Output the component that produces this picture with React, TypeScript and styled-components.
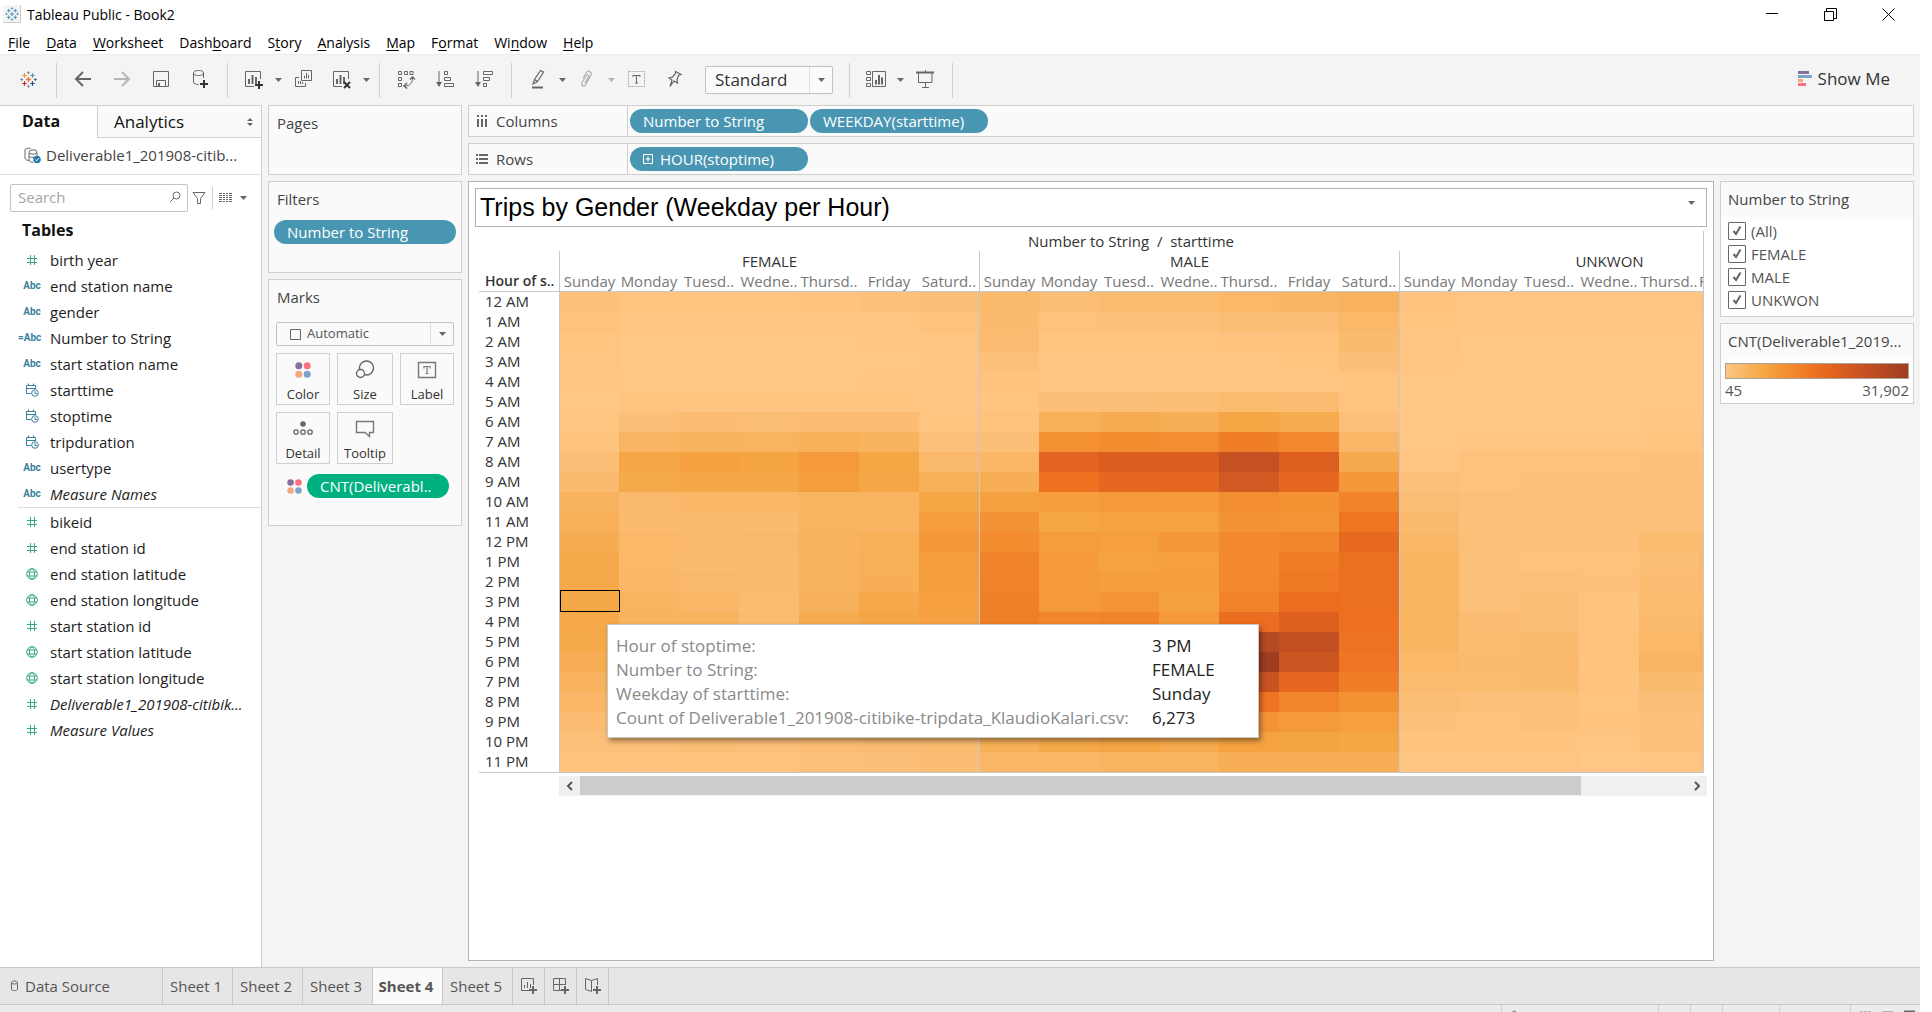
import React from "react";
import styled, { createGlobalStyle, css } from "styled-components";

/* ---------- theme values ---------- */

const sans = '"Open Sans", "Noto Sans", sans-serif';
const line = "#cfcfcf";
const panel = "#f4f4f4";
const card = "#fafafa";
const glyph = "#666666";
const blue = "#4996b2";
const green = "#00b180";

const GlobalStyle = createGlobalStyle`
  *, *::before, *::after { box-sizing: border-box; }
  body { margin: 0; background: #fff; font-family: ${sans}; font-size: 15px; color: #333; }
  button, input, select { font: inherit; color: inherit; margin: 0; padding: 0; }
  button { border: 0; background: none; }
  h1, h2, h3, ul, dl, dd { margin: 0; padding: 0; font-size: inherit; font-weight: 400; }
  ul { list-style: none; }
  svg { display: block; flex: none; }
`;

/* ---------- data ---------- */

const ramp = [
  "ffc685", "fcbe75", "f9b665", "f7ae54", "f5a645", "f59c3c", "f49234",
  "f2882d", "f07e27", "ee7422", "e96b20", "e36420", "db5e20", "d25921",
  "ca5422", "c14f22", "b84b23", "af4623", "a64122", "9e3d22",
].map((h) => [0, 2, 4].map((i) => parseInt(h.slice(i, i + 2), 16)));

const shade = (v: number) => {
  const lo = Math.min(Math.floor(v), ramp.length - 2);
  const t = v - lo;
  const mix = ramp[lo].map((c, i) => Math.round(c + (ramp[lo + 1][i] - c) * t));
  return `rgb(${mix.join(",")})`;
};

const days = ["Sunday", "Monday", "Tuesd..", "Wedne..", "Thursd..", "Friday", "Saturd.."];
/* the last pane runs past the right edge of the view, so its final labels shorten */
const lastDays = [...days.slice(0, 5), "F", ""];
const genders = ["FEMALE", "MALE", "UNKWON"];

const trips: [string, number[]][] = [
  ["12 AM", [0.6, 0.3, 0.3, 0.3, 0.4, 0.6, 0.9, 1.6, 1, 1.3, 1.3, 1.8, 2.1, 2.5, 0.4, 0.2, 0.2, 0.2, 0.2, 0.3, 0.3]],
  ["1 AM", [0.5, 0.1, 0.1, 0.1, 0.1, 0.2, 0.5, 1.5, 0.5, 0.6, 0.6, 1, 1, 1.8, 0.3, 0.1, 0.1, 0.1, 0.1, 0.1, 0.2]],
  ["2 AM", [0.3, 0, 0, 0, 0, 0.1, 0.2, 1.2, 0.3, 0.3, 0.3, 0.4, 0.5, 1.4, 0.2, 0, 0, 0, 0, 0, 0.1]],
  ["3 AM", [0.2, 0, 0, 0, 0, 0, 0.1, 0.7, 0.1, 0.1, 0.1, 0.2, 0.3, 0.9, 0.1, 0, 0, 0, 0, 0, 0]],
  ["4 AM", [0.1, 0, 0, 0, 0, 0.1, 0.1, 0.4, 0.1, 0.1, 0.1, 0.2, 0.2, 0.3, 0, 0, 0, 0, 0, 0, 0]],
  ["5 AM", [0, 0.3, 0.3, 0.3, 0.3, 0.3, 0.1, 0.3, 0.9, 0.9, 1, 1.3, 1.1, 0.3, 0, 0, 0, 0, 0, 0, 0]],
  ["6 AM", [0.1, 0.9, 1.1, 1, 1.2, 1.1, 0.3, 0.5, 2.7, 3.3, 2.9, 4, 3.4, 0.8, 0, 0, 0, 0, 0.1, 0.1, 0]],
  ["7 AM", [0.4, 2.1, 2.4, 2.3, 2.8, 2.4, 0.7, 0.9, 6.1, 6.7, 6.5, 8.1, 7, 1.9, 0, 0.1, 0.1, 0.1, 0.3, 0.2, 0.2]],
  ["8 AM", [0.9, 3.9, 4.5, 4.2, 5.2, 4, 1.6, 1.9, 11, 12, 12, 14.6, 11.8, 3.5, 0.1, 0.5, 0.5, 0.5, 0.6, 0.5, 0.5]],
  ["9 AM", [1.4, 3.6, 3.9, 3.9, 4.8, 3.9, 2.8, 3, 9.3, 10.6, 10.6, 13, 10.6, 5.4, 0.7, 0.5, 0.6, 0.6, 0.8, 0.8, 0.8]],
  ["10 AM", [2.4, 1.6, 1.9, 1.9, 2.2, 2.2, 4, 4.5, 4.8, 5.2, 5.1, 6.5, 6, 7.5, 1, 0.7, 0.6, 0.6, 0.7, 0.7, 1]],
  ["11 AM", [2.8, 1.5, 1.5, 1.5, 2.2, 2.2, 4.9, 5.9, 4.1, 4.3, 4.4, 5.9, 5.8, 8.8, 1.4, 0.6, 0.6, 0.6, 0.7, 0.8, 1.2]],
  ["12 PM", [3.3, 1.8, 1.6, 1.7, 2.4, 2.7, 5.4, 6.7, 4.9, 4.7, 5.4, 6.9, 7.3, 10.3, 1.9, 0.8, 0.6, 0.6, 1.3, 1.2, 1.8]],
  ["1 PM", [3.6, 1.8, 1.4, 1.5, 2.4, 2.8, 5, 7.4, 5.1, 4.3, 4.7, 6.9, 8.2, 9.5, 2.2, 0.7, 0.5, 0.5, 1, 1.6, 2]],
  ["2 PM", [3.6, 1.9, 1.7, 1.6, 2.4, 3, 4.8, 7.6, 5.1, 4.8, 4.8, 6.9, 8.5, 9.5, 2.2, 0.8, 0.8, 0.6, 1.1, 1.5, 2.2]],
  ["3 PM", [3.8, 2.2, 1.9, 1.3, 2.6, 3.7, 4.7, 7.8, 5.2, 5.8, 4.6, 7.5, 9.8, 9.5, 2.2, 0.8, 1, 0.4, 1.3, 1.5, 2.3]],
  ["4 PM", [3.7, 2.4, 2.4, 1.4, 3.4, 3.9, 4.5, 8, 7.2, 7.5, 5.3, 9.8, 11.7, 9.3, 2.2, 1.1, 1, 0.4, 1.5, 1.6, 2.2]],
  ["5 PM", [3.6, 3.4, 3.6, 2.4, 4.6, 4.2, 4.1, 7.8, 12.4, 13, 9.2, 16.3, 14.9, 9.2, 2.2, 1.3, 1.4, 0.5, 1.8, 2.2, 2]],
  ["6 PM", [3.1, 3.6, 3.8, 2.6, 4.9, 4, 3.4, 7, 13, 13.6, 9.6, 19, 13.7, 8.9, 1.8, 1.5, 1.6, 0.4, 2.1, 2.2, 1.8]],
  ["7 PM", [2.5, 2.7, 2.9, 2, 3.8, 3.1, 2.7, 5.8, 9.8, 10.4, 7.4, 14.3, 10.6, 8, 1.3, 1.3, 1.4, 0.4, 1.4, 1.5, 1.4]],
  ["8 PM", [1.9, 1.9, 2, 1.6, 2.5, 2.1, 2, 4.6, 6.4, 7, 5.6, 9, 7.3, 6.1, 1, 0.8, 0.8, 0.3, 0.9, 1, 1]],
  ["9 PM", [1.2, 1.3, 1.4, 1.2, 1.7, 1.6, 1.5, 3.8, 4.8, 5.2, 4.4, 6, 5.2, 4.7, 0.6, 0.5, 0.6, 0.4, 0.6, 0.7, 0.8]],
  ["10 PM", [0.8, 0.9, 1, 0.9, 1.1, 1.2, 1.3, 2.8, 3.6, 4.1, 3.5, 4.4, 4.2, 4, 0.4, 0.4, 0.4, 0.2, 0.6, 0.6, 0.6]],
  ["11 PM", [0.5, 0.4, 0.5, 0.5, 0.7, 0.9, 1.1, 1.9, 2, 2.3, 2.2, 3, 3, 3, 0.1, 0.2, 0.2, 0, 0.2, 0.4, 0.5]],
];

type Kind = "number" | "text" | "calc" | "date" | "geo";
type Field = { name: string; kind: Kind; italic?: boolean };

const dimensions: Field[] = [
  { name: "birth year", kind: "number" },
  { name: "end station name", kind: "text" },
  { name: "gender", kind: "text" },
  { name: "Number to String", kind: "calc" },
  { name: "start station name", kind: "text" },
  { name: "starttime", kind: "date" },
  { name: "stoptime", kind: "date" },
  { name: "tripduration", kind: "date" },
  { name: "usertype", kind: "text" },
  { name: "Measure Names", kind: "text", italic: true },
];

const measures: Field[] = [
  { name: "bikeid", kind: "number" },
  { name: "end station id", kind: "number" },
  { name: "end station latitude", kind: "geo" },
  { name: "end station longitude", kind: "geo" },
  { name: "start station id", kind: "number" },
  { name: "start station latitude", kind: "geo" },
  { name: "start station longitude", kind: "geo" },
  { name: "Deliverable1_201908-citibik...", kind: "number", italic: true },
  { name: "Measure Values", kind: "number", italic: true },
];

/* ---------- icons ---------- */

const plus = (x: number, y: number, r: number) => `M${x - r} ${y}H${x + r}M${x} ${y - r}V${y + r}`;

const TableauMark = ({ mono }: { mono?: boolean }) => {
  const c = (v: string) => (mono ? "#4b93b5" : v);
  return (
    <svg width={mono ? 14 : 17} height={mono ? 14 : 17} viewBox="0 0 17 17" fill="none">
      <path d={plus(8.5, 8.5, 2.5)} stroke={c("#e8762c")} strokeWidth="1.4" />
      <path d={plus(4.5, 4.5, 2.2)} stroke={c("#eb912c")} strokeWidth="1.2" />
      <path d={plus(12.5, 4.5, 2.2)} stroke={c("#5c8da5")} strokeWidth="1.2" />
      <path d={plus(4.5, 12.5, 2.2)} stroke={c("#c72037")} strokeWidth="1.2" />
      <path d={plus(12.5, 12.5, 2.2)} stroke={c("#1f447e")} strokeWidth="1.2" />
      <path d={plus(8.5, 1.7, 1.5)} stroke={c("#7199a6")} strokeWidth="1" />
      <path d={plus(8.5, 15.3, 1.5)} stroke={c("#8a86ad")} strokeWidth="1" />
      <path d={plus(1.7, 8.5, 1.5)} stroke={c("#8a86ad")} strokeWidth="1" />
      <path d={plus(15.3, 8.5, 1.5)} stroke={c("#5c6692")} strokeWidth="1" />
    </svg>
  );
};

const Draw = ({ w = 20, h = 20, d, sw = 1, color = glyph, children }: {
  w?: number; h?: number; d?: string; sw?: number; color?: string; children?: React.ReactNode;
}) => (
  <svg width={w} height={h} viewBox={`0 0 ${w} ${h}`} fill="none" stroke={color} strokeWidth={sw}>
    {d && <path d={d} />}
    {children}
  </svg>
);

const Caret = ({ color = glyph }: { color?: string }) => (
  <svg width="7" height="4" viewBox="0 0 7 4" fill={color}><path d="M0 0H7L3.5 4Z" /></svg>
);

const Back = () => <Draw d="M18 10H3M10 3L3 10L10 17" sw={2} />;
const Forward = () => <Draw d="M2 10H17M10 3L17 10L10 17" sw={2} color="#b5b5b5" />;
const Save = () => (
  <Draw d="M2.500 2.500H17.500V17.500H2.500ZM5.500 17.500V11.500H14.500V17.500">
    <path d="M7 14H9V18H7Z" fill={glyph} stroke="none" />
  </Draw>
);
const AddData = () => (
  <Draw d="M3.500 4V13C3.500 14.500 6 15.500 8.500 15.500M13.500 4V9">
    <ellipse cx="8.500" cy="4" rx="5" ry="2.500" />
    <path d="M14 11V19M10 15H18" stroke="#333" strokeWidth="2" />
  </Draw>
);
const SheetBars = "M2.500 17.500V2.500H17.500V10M2.500 17.500H11";
const Bars = () => <path d="M6 15V10M9.500 15V6M13 15V8" strokeWidth="2" />;
const NewSheet = () => (
  <Draw w={21} h={21} d={SheetBars}><Bars /><path d="M16 12V20M12 16H20" stroke="#333" strokeWidth="2" /></Draw>
);
const Duplicate = () => (
  <Draw d="M8.500 1.500H18.500V11.500H8.500ZM6 8.500H2.500V17.500H12.500V14">
    <path d="M11.500 9.500V7M13.500 9.500V4M15.500 9.500V6M5.500 15V12M7.500 15V12M9.500 15V13" />
  </Draw>
);
const ClearSheet = () => (
  <Draw w={21} h={21} d={SheetBars}><Bars /><path d="M13 13L19 19M19 13L13 19" stroke="#333" strokeWidth="2" /></Draw>
);
const Swap = () => (
  <Draw d="M2.500 2.500H5.500V5.500H2.500ZM8.500 2.500H11.500V5.500H8.500ZM14 2.500H17V5.500H14ZM2.500 8.500H5.500V11.500H2.500ZM2.500 14.500H5.500V17.500H2.500ZM9 17C14 17 16.500 14 16.500 9">
    <path d="M14 10.500L16.500 8L19 10.500M11 14L8 17L11 19.500" strokeWidth="1.500" />
  </Draw>
);
const SortAsc = () => (
  <Draw d="M4 2V16M9.500 2.500H12.500V5.500H9.500ZM9.500 8.500H15.500V11.500H9.500ZM9.500 14.500H18.500V17.500H9.500Z" sw={1}>
    <path d="M1 13H7L4 18Z" fill={glyph} stroke="none" />
  </Draw>
);
const SortDesc = () => (
  <Draw d="M4 2V16M9.500 2.500H18.500V5.500H9.500ZM9.500 8.500H15.500V11.500H9.500ZM9.500 14.500H12.500V17.500H9.500Z" sw={1}>
    <path d="M1 13H7L4 18Z" fill={glyph} stroke="none" />
  </Draw>
);
const Highlighter = () => (
  <Draw d="M12.500 1.500L15.500 3L9.500 12.500L5 15L6.500 10.500ZM6.500 10.500L9.500 12.500" sw={1.2}>
    <path d="M4 18.500H15" strokeWidth="2" />
  </Draw>
);
const Clip = () => (
  <Draw color="#b0b0b0" sw={1.2} d="M6 9L9.500 3.500C11 1 15 2.500 14 6L9 15C7.500 18.500 3.500 17 5 13.500L9 7C10 5 12.500 6 11.500 8L8 14" />
);
const LabelBox = () => (
  <Draw>
    <rect x="2.500" y="2.500" width="16" height="15" strokeDasharray="2 1" stroke="#aaa" />
    <path d="M7 6.500H14M10.500 6.500V14M9 14H12M7 6.500V8M14 6.500V8" />
  </Draw>
);
const Pin = () => <Draw sw={1.2} d="M10.500 2.500L16 5.500L13.500 6.500L12 10.500L12.500 14L9 12L5 17.500L7 11L4 9L7.500 8L10.500 4.500Z" />;
const ShowCards = () => (
  <Draw w={22} d="M1.500 2.500H5.500V5.500H1.500ZM1.500 8.500H5.500V11.500H1.500ZM1.500 14.500H5.500V17.500H1.500ZM7.500 2.500H20.500V17.500H7.500Z">
    <path d="M11 15.500V11M14 15.500V6M17 15.500V8.500" strokeWidth="2" />
  </Draw>
);
const Present = () => (
  <Draw d="M3.500 4V13.500H17V4M10.500 13.500V18M7 18.500H14M10.500 1V3">
    <path d="M1 3.500H19" strokeWidth="2" />
  </Draw>
);
const ShowMeMark = () => (
  <svg width="14" height="16" viewBox="0 0 14 16">
    <path d="M0 0H11V3H0Z" fill="#866f9a" /><path d="M0 4H14V7H0Z" fill="#7ea2ca" />
    <path d="M0 8H5V11H0Z" fill="#f3a77e" /><path d="M0 12H8V15H0Z" fill="#f9707f" />
  </svg>
);
const ColorDots = ({ size = 16 }: { size?: number }) => (
  <svg width={size} height={size} viewBox="0 0 16 16">
    <circle cx="3.800" cy="3.800" r="3.500" fill="#866f9a" /><circle cx="12.200" cy="3.800" r="3.500" fill="#f9707f" />
    <circle cx="3.800" cy="12.200" r="3.500" fill="#f3a77e" /><circle cx="12.200" cy="12.200" r="3.500" fill="#7ea2ca" />
  </svg>
);
const SizeMark = () => (
  <Draw sw={1.4}><circle cx="11.500" cy="8" r="7" /><circle cx="5.500" cy="13.500" r="4" fill={card} /></Draw>
);
const LabelMark = () => (
  <Draw d="M1.500 2.500H18.500V17.500H1.500Z" sw={1.4} color="#777">
    <path d="M7 6.500H13M10 6V14M8.500 13.500H11.500M7 6V8.500M13 6V8.500" strokeWidth="1.200" />
  </Draw>
);
const DetailMark = () => (
  <Draw sw={1.3}>
    <circle cx="10" cy="5" r="2.800" fill={glyph} stroke="none" />
    <circle cx="3" cy="13" r="2.200" /><circle cx="10" cy="13" r="2.200" /><circle cx="17" cy="13" r="2.200" />
  </Draw>
);
const TooltipMark = () => <Draw d="M1.500 2.500H18.500V13.500H14.500V17.500L10 13.500H1.500Z" sw={1.4} color="#777" />;
const Hash = () => <Draw w={12} h={12} d="M4.500 1V11M8.500 1V11M1 4.500H11M1 8.500H11" color="#3fa882" />;
const Globe = () => (
  <Draw w={12} h={12} color="#3fa882">
    <circle cx="6" cy="6" r="5.300" /><ellipse cx="6" cy="6" rx="2.500" ry="5.300" />
    <path d="M1 4H11M1 8H11" />
  </Draw>
);
const DateMark = () => (
  <Draw w={14} h={14} color="#3a7f9c" d="M6 10.500H1.500V2.500H10.500V6M1.500 5.500H10.500M3.500 0.500V3M8.500 0.500V3">
    <circle cx="10" cy="10" r="3.300" /><path d="M10 8V10.500H12" />
  </Draw>
);
const SourceMark = () => (
  <Draw w={17} h={17}>
    <path d="M1 3V11C1 12.500 3 13.500 5 13.500M1 3C1 1.500 4 1 6.500 1.200M5 6V13C5 14.500 7 15.500 9 15.500M13 6V9" />
    <ellipse cx="9" cy="5" rx="4" ry="2.200" /><path d="M5 9C6 10.500 9 11 10 10" />
    <circle cx="13" cy="12.500" r="3.800" fill="#2f7ba8" stroke="none" />
    <path d="M11.300 12.500L12.600 13.800L14.800 11.300" stroke="#fff" />
  </Draw>
);
const SearchMark = () => <Draw w={12} h={12} d="M5 7L1 11"><circle cx="7.500" cy="4.500" r="3.500" /></Draw>;
const Funnel = () => <Draw w={14} h={14} d="M1 1.500H13L8.500 7.500V12.500H5.500V7.500Z" />;
const ListMark = () => (
  <Draw w={13} h={10} d="M0 0.500H13M0 2.500H13M0 4.500H13M0 6.500H13M0 8.500H13">
    <path d="M3.500 0V10M6.500 0V10M9.500 0V10" stroke="#fff" />
  </Draw>
);
const UpDown = () => <svg width="6" height="8" viewBox="0 0 6 8" fill={glyph}><path d="M0 3L3 0L6 3ZM0 5H6L3 8Z" /></svg>;
const ColumnsMark = () => (
  <Draw w={12} h={12} d="M2 4V12M6 4V12M10 4V12M2 0V2M6 0V2M10 0V2" sw={2} />
);
const RowsMark = () => (
  <Draw w={12} h={12} d="M3 2H12M3 6H12M3 10H12M0 2H2M0 6H2M0 10H2" sw={2} />
);
const Expand = () => <Draw w={10} h={10} color="#fff" d="M0.500 0.500H9.500V9.500H0.500ZM5 2.500V7.500M2.500 5H7.500" />;
const Cylinder = () => (
  <Draw w={9} h={12} d="M1.500 3V9.500C1.500 11 7.500 11 7.500 9.500V3"><ellipse cx="4.500" cy="2.500" rx="3" ry="1.500" /></Draw>
);
const Chevron = ({ flip }: { flip?: boolean }) => (
  <Draw w={8} h={10} d={flip ? "M2 1L6 5L2 9" : "M6 1L2 5L6 9"} sw={2} color="#555" />
);

/* ---------- window chrome ---------- */

const Window = styled.div`
  display: flex;
  flex-direction: column;
  height: 100vh;
  padding-right: 12px;
  overflow: hidden;
`;

const TitleBar = styled.header`
  display: flex;
  align-items: center;
  flex: none;
  height: 28px;
  padding-left: 3px;
  font-size: 14px;
  color: #000;
`;

const AppTile = styled.span`
  display: grid;
  place-items: center;
  width: 18px;
  height: 18px;
  margin-right: 6px;
  background: #f4f4f4;
  border: solid #ccc;
  border-width: 0 1px 1px 0;
`;

const WindowButtons = styled.div`
  display: flex;
  margin-left: auto;
  padding-right: 3px;
`;

const WindowButton = styled.button`
  display: grid;
  place-items: center;
  width: 58px;
  height: 28px;
`;

const MenuBar = styled.nav`
  display: flex;
  flex: none;
  gap: 16px;
  height: 26px;
  padding: 2px 0 0 8px;
  font-size: 14px;
  color: #000;

  u { text-underline-offset: 2px; }
`;

const ToolBar = styled.div`
  display: flex;
  align-items: center;
  flex: none;
  height: 51px;
  background: ${panel};
  border-top: 1px solid #ececec;
`;

const ToolGroup = styled.div<{ $first?: boolean }>`
  display: flex;
  align-items: center;
  height: 35px;
  padding: ${(p) => (p.$first ? "0 8px 0 9px" : "0 8px 0 6px")};
  border-right: 1px solid ${line};
`;

const ToolButton = styled.button`
  display: grid;
  place-items: center;
  width: 39px;
  height: 35px;
  padding-bottom: 2px;
`;

const MenuArrow = styled.button`
  display: grid;
  place-items: center;
  width: 10px;
  height: 35px;
`;

const SelectBox = styled.div<{ $tall?: boolean }>`
  display: grid;
  grid-template-columns: 1fr 23px;
  align-items: center;
  height: ${(p) => (p.$tall ? 28 : 24)}px;
  background: ${card};
  border: 1px solid #c3c3c3;
  border-radius: 2px;
  ${(p) => p.$tall && css`width: 128px; margin: 0 8px 0 11px; font-size: 17px;`}
  ${(p) => !p.$tall && css`margin-top: 6px; font-size: 13px; color: #555;`}

  select {
    grid-area: 1 / 1 / 2 / 3;
    height: 100%;
    padding: 0 0 2px ${(p) => (p.$tall ? 9 : 30)}px;
    appearance: none;
    background: none;
    border: 0;
  }
`;

const SelectArrow = styled.span`
  display: grid;
  grid-area: 1 / 2;
  place-items: center;
  height: 100%;
  border-left: 1px solid #e0e0e0;
  pointer-events: none;
`;

const SelectIcon = styled.span`
  grid-area: 1 / 1;
  justify-self: start;
  margin-left: 13px;
  pointer-events: none;
`;

const ShowMe = styled.button`
  display: flex;
  align-items: center;
  gap: 6px;
  margin: 0 30px 0 auto;
  padding-bottom: 3px;
  font-size: 17px;
`;

/* ---------- main columns ---------- */

const Main = styled.main`
  display: flex;
  flex: 1;
  gap: 6px;
  min-height: 0;
  padding-right: 6px;
  background: ${panel};
`;

const DataPane = styled.aside`
  flex: none;
  width: 262px;
  background: #fff;
  border: solid ${line};
  border-width: 1px 1px 0 0;
`;

const PaneTabs = styled.div`
  display: flex;
  height: 32px;
`;

const PaneTab = styled.button<{ $active?: boolean }>`
  display: flex;
  align-items: center;
  justify-content: space-between;
  color: #111;
  text-align: left;
  ${(p) => p.$active
    ? css`width: 97px; padding: 0 0 2px 22px; font-size: 16px; font-weight: 700;`
    : css`
        flex: 1;
        padding: 0 8px 0 16px;
        font-size: 17px;
        background: ${card};
        border: solid ${line};
        border-width: 0 0 1px 1px;
      `}
`;

const Source = styled.div`
  display: flex;
  align-items: center;
  gap: 5px;
  height: 37px;
  padding: 0 0 2px 24px;
  color: #444;
  border-bottom: 1px solid #e0e0e0;
`;

const SearchRow = styled.div`
  display: flex;
  align-items: center;
  padding: 9px 0 0 10px;
`;

const SearchBox = styled.label`
  display: flex;
  align-items: center;
  width: 178px;
  height: 28px;
  padding: 0 6px 2px 7px;
  border: 1px solid #c3c3c3;
  border-radius: 2px;

  input {
    flex: 1;
    min-width: 0;
    border: 0;
    outline: 0;
    background: none;
  }
  input::placeholder { color: #a5a5a5; opacity: 1; }
`;

const PaneTool = styled.button<{ $split?: boolean }>`
  display: flex;
  align-items: center;
  gap: 8px;
  height: 22px;
  padding: ${(p) => (p.$split ? "0 0 0 6px" : "0 6px 0 4px")};
  border-left: ${(p) => (p.$split ? `1px solid ${line}` : 0)};
`;

const Heading = styled.h2`
  padding: 2px 0 0 22px;
  font-size: 16px;
  font-weight: 700;
  line-height: 33px;
  color: #111;
`;

const FieldList = styled.ul<{ $ruled?: boolean }>`
  margin-left: 18px;
  color: #1d1d1d;
  border-top: ${(p) => (p.$ruled ? "1px solid #ddd" : 0)};
  padding-top: ${(p) => (p.$ruled ? 1 : 0)}px;
`;

const FieldRow = styled.li<{ $italic?: boolean }>`
  display: grid;
  grid-template-columns: 28px 1fr;
  gap: 4px;
  align-items: center;
  height: 26px;
  font-style: ${(p) => (p.$italic ? "italic" : "normal")};
  white-space: nowrap;
`;

const FieldIcon = styled.span<{ $calc: boolean }>`
  display: grid;
  place-items: center;
  padding-right: ${(p) => (p.$calc ? 5 : 0)}px;
  font: 700 10px/12px Roboto, sans-serif;
  color: #3a7f9c;
`;

const FieldKind = ({ kind }: { kind: Kind }) => {
  if (kind === "number") return <Hash />;
  if (kind === "geo") return <Globe />;
  if (kind === "date") return <DateMark />;
  return <>{kind === "calc" ? "=Abc" : "Abc"}</>;
};

const Fields = ({ items, ruled }: { items: Field[]; ruled?: boolean }) => (
  <FieldList $ruled={ruled}>
    {items.map((f) => (
      <FieldRow key={f.name} $italic={f.italic}>
        <FieldIcon $calc={f.kind === "calc"}><FieldKind kind={f.kind} /></FieldIcon>
        {f.name}
      </FieldRow>
    ))}
  </FieldList>
);

/* ---------- cards and shelves ---------- */

const CardColumn = styled.div`
  display: flex;
  flex-direction: column;
  flex: none;
  gap: 6px;
  width: 194px;
`;

const Card = styled.section<{ $min?: number }>`
  min-height: ${(p) => p.$min ?? 0}px;
  background: ${card};
  border: 1px solid ${line};
`;

const CardTitle = styled.h3`
  padding: 0 0 2px 8px;
  line-height: 34px;
  color: #444;
`;

const Pill = styled.button<{ $measure?: boolean; $fixed?: boolean }>`
  display: flex;
  align-items: center;
  gap: 7px;
  width: ${(p) => (p.$fixed ? "178px" : "auto")};
  flex: ${(p) => (p.$fixed ? "none" : 1)};
  height: 24px;
  padding: 0 13px;
  color: #fff;
  font-weight: 500;
  white-space: nowrap;
  background: ${(p) => (p.$measure ? green : blue)};
  border-radius: 12px;
`;

const FilterSlot = styled.div`
  display: flex;
  padding: 2px 5px 28px;
`;

const MarksBody = styled.div`
  padding: 0 7px 27px;
`;

const MarkGrid = styled.div`
  display: grid;
  grid-template-columns: 54px 56px 54px;
  gap: 7px;
  padding: 7px 0 10px;
`;

const MarkButton = styled.button`
  display: flex;
  flex-direction: column;
  align-items: center;
  justify-content: space-between;
  height: 52px;
  padding: 6px 0 1px;
  font-size: 13px;
  border: 1px solid ${line};
`;

const MarkIcon = styled.span`
  display: grid;
  place-items: center;
  height: 20px;
`;

const MarkPillRow = styled.div`
  display: flex;
  align-items: center;
  gap: 5px;
  padding: 0 5px 0 11px;
`;

const Work = styled.div`
  display: flex;
  flex: 1;
  flex-direction: column;
  gap: 6px;
  min-width: 0;
  padding-bottom: 6px;
`;

const Shelf = styled.section`
  display: flex;
  flex: none;
  height: 32px;
  background: ${card};
  border: 1px solid ${line};
`;

const ShelfName = styled.h3`
  display: flex;
  align-items: center;
  gap: 8px;
  width: 159px;
  padding-left: 7px;
  color: #444;
  border-right: 1px solid ${line};
`;

const ShelfPills = styled.div`
  display: flex;
  align-items: center;
  gap: 2px;
  padding-left: 2px;
`;

const Stage = styled.div`
  display: flex;
  flex: 1;
  gap: 6px;
  min-height: 0;
`;

/* ---------- view ---------- */

const Canvas = styled.section`
  flex: 1;
  min-width: 0;
  background: #fff;
  border: 1px solid #b3b3b3;
`;

const SheetTitle = styled.div`
  display: flex;
  justify-content: space-between;
  height: 39px;
  margin: 6px 6px 4px;
  padding: 0 11px 0 4px;
  border: 1px solid #b3b3b3;

  h1 {
    font: 25px/37px "Liberation Sans", Arial, sans-serif;
    color: #000;
  }
  button { height: 27px; }
`;

const Viewport = styled.div`
  position: relative;
  margin: 0 9px 0 10px;
  overflow: hidden;
  border: solid #c8c8c8;
  border-width: 0 1px 1px 0;
`;

const FieldHeader = styled.div`
  padding-left: 80px;
  line-height: 20px;
  text-align: center;
`;

const HeatTable = styled.table`
  width: 1340px;
  table-layout: fixed;
  border-spacing: 0;
  line-height: 20px;

  th, td { padding: 0; font-weight: 400; white-space: nowrap; }
`;

const paneEdge = css`border-left: 1px solid #c8c8c8;`;

const GenderHead = styled.th`
  && { ${paneEdge} font-weight: 500; }
`;

const CornerHead = styled.th`
  && {
    padding-left: 6px;
    font-weight: 600;
    font-size: 14px;
    text-align: left;
    border-bottom: 1px solid #c8c8c8;
  }
`;

const DayHead = styled.th<{ $edge: boolean; $cut: boolean }>`
  && {
    color: #777;
    text-align: ${(p) => (p.$cut ? "left" : "center")};
    border-bottom: 1px solid #c8c8c8;
    ${(p) => p.$edge && paneEdge}
  }
`;

const HourHead = styled.th`
  && {
    height: 20px;
    padding: 0 0 2px 6px;
    font-weight: 500;
    line-height: 18px;
    text-align: left;
  }
`;

const Cell = styled.td<{ $edge: boolean; $picked: boolean }>`
  && {
    ${(p) => p.$edge && paneEdge}
    ${(p) => p.$picked && css`
      position: relative;

      &::after {
        content: "";
        position: absolute;
        inset: -2px -1px 0 0;
        border: 1px solid #000;
      }
    `}
  }
`;

const Tooltip = styled.dl`
  position: absolute;
  top: 393px;
  left: 128px;
  display: grid;
  grid-template-columns: minmax(532px, max-content) 1fr;
  column-gap: 4px;
  min-width: 652px;
  padding: 9px 8px 7px;
  font-size: 17px;
  line-height: 24px;
  background: #fff;
  border: 1px solid #c8c8c8;
  box-shadow: 2px 3px 5px rgba(0, 0, 0, 0.4);

  dt { color: #8a8a8a; }
  dd { color: #222; }
`;

const ScrollBar = styled.div`
  display: flex;
  height: 20px;
  margin: 3px 6px 0 90px;
  background: #f0f0f0;

  button { display: grid; place-items: center; width: 21px; }
`;

const Thumb = styled.span`
  flex: 19;
  background: #cdcdcd;
  border-bottom: 1px solid #f0f0f0;
`;

const ThumbRest = styled.span`
  flex: 2;
`;

/* ---------- legend cards ---------- */

const CardHead = styled(CardTitle)`
  padding: 0 0 1px 7px;
  line-height: 34px;
  white-space: nowrap;
`;

const CheckList = styled.div`
  padding: 2px 7px 5px;
  background: #fff;
`;

const CheckRow = styled.label`
  display: grid;
  grid-template-columns: 18px 1fr;
  column-gap: 5px;
  align-items: center;
  height: 23px;
  color: #555;

  input {
    grid-area: 1 / 1;
    width: 18px;
    height: 18px;
    appearance: none;
    background: #fff;
    border: 1px solid #666;
    border-radius: 1px;
  }
  svg { grid-area: 1 / 1; justify-self: center; pointer-events: none; }
`;

const Legend = styled.div`
  padding: 4px 4px 2px;
  background: #fff;
`;

const Gradient = styled.div`
  height: 16px;
  background: linear-gradient(to right, ${ramp.map((c) => `rgb(${c.join(",")})`).join(", ")});
  border: 1px solid #aaa596;
`;

const LegendEnds = styled.div`
  display: flex;
  justify-content: space-between;
  line-height: 22px;
  color: #555;
`;

/* ---------- footer ---------- */

const SheetTabs = styled.nav`
  display: flex;
  flex: none;
  height: 38px;
  background: #e6e6e6;
  border: solid #c8c8c8;
  border-width: 1px 0;
`;

const SheetTab = styled.button<{ $active?: boolean; $source?: boolean }>`
  display: flex;
  align-items: center;
  justify-content: ${(p) => (p.$source ? "flex-start" : "center")};
  gap: 6px;
  width: ${(p) => (p.$source ? 163 : 70)}px;
  padding: ${(p) => (p.$source ? "0 0 0 10px" : "0 3px 0 0")};
  color: #555;
  font-weight: ${(p) => (p.$active ? 700 : 400)};
  background: ${(p) => (p.$active ? card : "transparent")};
  border-right: 1px solid #c8c8c8;
`;

const NewTab = styled.button`
  display: grid;
  place-items: center;
  width: 32px;
  border-right: 1px solid #c8c8c8;
`;

const StatusBar = styled.footer`
  display: flex;
  flex: none;
  justify-content: flex-end;
  height: 7px;
  overflow: hidden;
  background: #ebebeb;
`;

const StatusCell = styled.span<{ $w: number }>`
  display: flex;
  gap: 11px;
  width: ${(p) => p.$w}px;
  padding: 5px 8px 0 9px;
  border-left: 1px solid ${line};
`;

const menus = [
  ["", "F", "ile"], ["", "D", "ata"], ["", "W", "orksheet"], ["Dash", "b", "oard"], ["S", "t", "ory"],
  ["", "A", "nalysis"], ["", "M", "ap"], ["F", "o", "rmat"], ["Wi", "n", "dow"], ["", "H", "elp"],
];

const Tool = ({ label, children }: { label: string; children: React.ReactNode }) => (
  <ToolButton aria-label={label}>{children}</ToolButton>
);

const Arrow = ({ label, color }: { label: string; color?: string }) => (
  <MenuArrow aria-label={label}><Caret color={color} /></MenuArrow>
);

const Mark = ({ name, children }: { name: string; children: React.ReactNode }) => (
  <MarkButton><MarkIcon>{children}</MarkIcon>{name}</MarkButton>
);

const HeatMap = () => (
  <HeatTable>
    <colgroup>
      <col style={{ width: 80 }} />
      {trips[0][1].map((_, i) => <col key={i} />)}
    </colgroup>
    <thead>
      <tr>
        <td />
        {genders.map((g) => <GenderHead key={g} colSpan={7}>{g}</GenderHead>)}
      </tr>
      <tr>
        <CornerHead>Hour of s..</CornerHead>
        {genders.flatMap((g, n) => (n === 2 ? lastDays : days).map((d, i) => (
          <DayHead key={g + i} $edge={i === 0} $cut={d === "F"}>{d}</DayHead>
        )))}
      </tr>
    </thead>
    <tbody>
      {trips.map(([hour, row]) => (
        <tr key={hour}>
          <HourHead scope="row">{hour}</HourHead>
          {row.map((v, i) => (
            <Cell
              key={i}
              $edge={i % 7 === 0}
              $picked={hour === "3 PM" && i === 0}
              style={{ backgroundColor: shade(v) }}
            />
          ))}
        </tr>
      ))}
    </tbody>
  </HeatTable>
);

export default function App() {
  return (
    <Window>
      <GlobalStyle />
      <TitleBar>
        <AppTile><TableauMark mono /></AppTile>
        Tableau Public - Book2
        <WindowButtons>
          <WindowButton aria-label="Minimize"><Draw w={12} h={12} d="M0 5.500H12" color="#000" /></WindowButton>
          <WindowButton aria-label="Restore">
            <Draw w={13} h={13} d="M0.500 3.500H9.500V12.500H0.500ZM2.500 3V0.500H12.500V10.500H10" color="#000" />
          </WindowButton>
          <WindowButton aria-label="Close"><Draw w={13} h={13} d="M0.500 0.500L12.500 12.500M12.500 0.500L0.500 12.500" color="#000" /></WindowButton>
        </WindowButtons>
      </TitleBar>

      <MenuBar>
        {menus.map(([a, u, b]) => <button key={a + u + b}>{a}<u>{u}</u>{b}</button>)}
      </MenuBar>

      <ToolBar>
        <ToolGroup $first><Tool label="Start page"><TableauMark /></Tool></ToolGroup>
        <ToolGroup>
          <Tool label="Undo"><Back /></Tool>
          <Tool label="Redo"><Forward /></Tool>
          <Tool label="Save"><Save /></Tool>
          <Tool label="New data source"><AddData /></Tool>
        </ToolGroup>
        <ToolGroup>
          <Tool label="New worksheet"><NewSheet /></Tool>
          <Arrow label="New worksheet options" />
          <Tool label="Duplicate"><Duplicate /></Tool>
          <Tool label="Clear sheet"><ClearSheet /></Tool>
          <Arrow label="Clear sheet options" />
        </ToolGroup>
        <ToolGroup>
          <Tool label="Swap rows and columns"><Swap /></Tool>
          <Tool label="Sort ascending"><SortAsc /></Tool>
          <Tool label="Sort descending"><SortDesc /></Tool>
        </ToolGroup>
        <ToolGroup>
          <Tool label="Highlight"><Highlighter /></Tool>
          <Arrow label="Highlight options" />
          <Tool label="Group members"><Clip /></Tool>
          <Arrow label="Group options" color="#b5b5b5" />
          <Tool label="Show mark labels"><LabelBox /></Tool>
          <Tool label="Fix axes"><Pin /></Tool>
          <SelectBox $tall>
            <select aria-label="Fit"><option>Standard</option></select>
            <SelectArrow><Caret /></SelectArrow>
          </SelectBox>
        </ToolGroup>
        <ToolGroup>
          <Tool label="Show cards"><ShowCards /></Tool>
          <Arrow label="Card options" />
          <Tool label="Presentation mode"><Present /></Tool>
        </ToolGroup>
        <ShowMe><ShowMeMark />Show Me</ShowMe>
      </ToolBar>

      <Main>
        <DataPane>
          <PaneTabs>
            <PaneTab $active>Data</PaneTab>
            <PaneTab>Analytics<UpDown /></PaneTab>
          </PaneTabs>
          <Source><SourceMark />Deliverable1_201908-citib...</Source>
          <SearchRow>
            <SearchBox><input aria-label="Search" placeholder="Search" /><SearchMark /></SearchBox>
            <PaneTool aria-label="Filter fields"><Funnel /></PaneTool>
            <PaneTool $split aria-label="View options"><ListMark /><Caret /></PaneTool>
          </SearchRow>
          <Heading>Tables</Heading>
          <Fields items={dimensions} />
          <Fields items={measures} ruled />
        </DataPane>

        <CardColumn>
          <Card $min={70}><CardTitle>Pages</CardTitle></Card>
          <Card>
            <CardTitle>Filters</CardTitle>
            <FilterSlot><Pill>Number to String</Pill></FilterSlot>
          </Card>
          <Card>
            <CardTitle>Marks</CardTitle>
            <MarksBody>
              <SelectBox>
                <SelectIcon><Draw w={11} h={11} d="M0.500 0.500H10.500V10.500H0.500Z" /></SelectIcon>
                <select aria-label="Mark type"><option>Automatic</option></select>
                <SelectArrow><Caret /></SelectArrow>
              </SelectBox>
              <MarkGrid>
                <Mark name="Color"><ColorDots /></Mark>
                <Mark name="Size"><SizeMark /></Mark>
                <Mark name="Label"><LabelMark /></Mark>
                <Mark name="Detail"><DetailMark /></Mark>
                <Mark name="Tooltip"><TooltipMark /></Mark>
              </MarkGrid>
              <MarkPillRow><ColorDots size={15} /><Pill $measure>CNT(Deliverabl..</Pill></MarkPillRow>
            </MarksBody>
          </Card>
        </CardColumn>

        <Work>
          <Shelf>
            <ShelfName><ColumnsMark />Columns</ShelfName>
            <ShelfPills>
              <Pill $fixed>Number to String</Pill>
              <Pill $fixed>WEEKDAY(starttime)</Pill>
            </ShelfPills>
          </Shelf>
          <Shelf>
            <ShelfName><RowsMark />Rows</ShelfName>
            <ShelfPills><Pill $fixed><Expand />HOUR(stoptime)</Pill></ShelfPills>
          </Shelf>
          <Stage>
            <Canvas>
              <SheetTitle>
                <h1>Trips by Gender (Weekday per Hour)</h1>
                <button aria-label="Title options"><Caret /></button>
              </SheetTitle>
              <Viewport>
                <FieldHeader>Number to String&nbsp; /&nbsp; starttime</FieldHeader>
                <HeatMap />
                <Tooltip>
                  <dt>Hour of stoptime:</dt><dd>3 PM</dd>
                  <dt>Number to String:</dt><dd>FEMALE</dd>
                  <dt>Weekday of starttime:</dt><dd>Sunday</dd>
                  <dt>Count of Deliverable1_201908-citibike-tripdata_KlaudioKalari.csv:</dt><dd>6,273</dd>
                </Tooltip>
              </Viewport>
              <ScrollBar>
                <button aria-label="Scroll left"><Chevron /></button>
                <Thumb /><ThumbRest />
                <button aria-label="Scroll right"><Chevron flip /></button>
              </ScrollBar>
            </Canvas>

            <CardColumn>
              <Card>
                <CardHead>Number to String</CardHead>
                <CheckList>
                  {["(All)", ...genders].map((g) => (
                    <CheckRow key={g}>
                      <input type="checkbox" defaultChecked />
                      <Draw w={10} h={12} d="M1.500 6L4 9L8.500 1.500" sw={2} />
                      {g}
                    </CheckRow>
                  ))}
                </CheckList>
              </Card>
              <Card>
                <CardHead>CNT(Deliverable1_2019...</CardHead>
                <Legend>
                  <Gradient />
                  <LegendEnds><span>45</span><span>31,902</span></LegendEnds>
                </Legend>
              </Card>
            </CardColumn>
          </Stage>
        </Work>
      </Main>

      <SheetTabs>
        <SheetTab $source><Cylinder />Data Source</SheetTab>
        {[1, 2, 3, 4, 5].map((n) => <SheetTab key={n} $active={n === 4}>Sheet {n}</SheetTab>)}
        <NewTab aria-label="New worksheet tab">
          <Draw w={18} h={18} d="M1.500 13.500V1.500H13.500V8M1.500 13.500H9M4.500 11V8M7.500 11V5M10.500 11V7">
            <path d="M13 9V17M9 13H17" strokeWidth="2" />
          </Draw>
        </NewTab>
        <NewTab aria-label="New dashboard tab">
          <Draw w={18} h={18} d="M1.500 13.500V1.500H13.500V8M1.500 13.500H9M7.500 1.500V13.500M1.500 7.500H13.500">
            <path d="M13 9V17M9 13H17" strokeWidth="2" />
          </Draw>
        </NewTab>
        <NewTab aria-label="New story tab">
          <Draw w={18} h={18} d="M1.500 1.500L7.500 3.500L13.500 1.500V8M1.500 1.500V12.500L7.500 14.500M7.500 3.500V14.500">
            <path d="M13 9V17M9 13H17" strokeWidth="2" />
          </Draw>
        </NewTab>
      </SheetTabs>

      <StatusBar>
        <StatusCell $w={157}><Draw w={6} h={6} d="M1 5V2.500L2.500 1H4L5 2.500V5" /></StatusCell>
        <StatusCell $w={32} /><StatusCell $w={32} /><StatusCell $w={57} /><StatusCell $w={71} />
        <StatusCell $w={70}>
          <Draw w={11} h={6} d="M0 1.500H3M4 1.500H7M8 1.500H11" color="#b5b5b5" />
          <Draw w={11} h={6} d="M0 1.500H11" color="#b5b5b5" />
          <Draw w={11} h={6} d="M0 1.500H11" sw={2} />
        </StatusCell>
      </StatusBar>
    </Window>
  );
}
